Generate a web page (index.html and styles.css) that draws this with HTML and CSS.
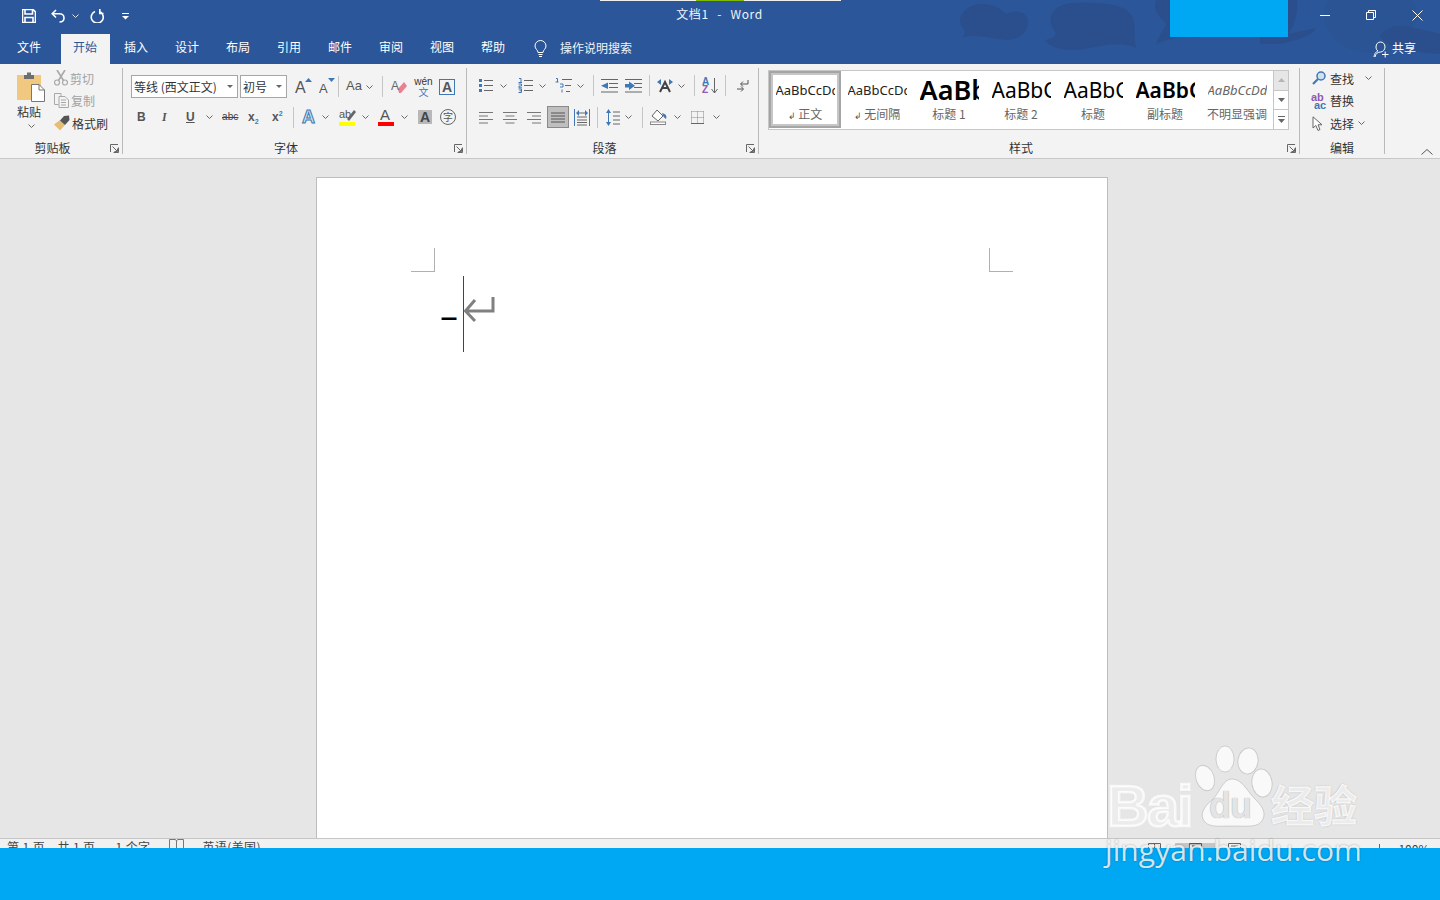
FILE: index.html
```html
<!DOCTYPE html>
<html lang="zh">
<head>
<meta charset="utf-8">
<title>文档1 - Word</title>
<link rel="stylesheet" href="styles.css">
</head>
<body>
<svg class="defs" width="0" height="0">
  <symbol id="chev" viewBox="0 0 7 4"><path d="M.5.5 3.5 3.5 6.5.5" fill="none" stroke="#666" stroke-width="1"/></symbol>
  <symbol id="launch" viewBox="0 0 9 9"><path d="M.5 8V.5H8M8.5 3.5V8.5H3.5M2.5 2.5 7 7M7.5 4.5V7.5H4.5" fill="none" stroke="#666" stroke-width="1"/></symbol>
</svg>
<div class="app">
  <header class="titlebar">
    <svg class="art" width="500" height="64" viewBox="0 0 500 64">
      <ellipse cx="430" cy="15" rx="46" ry="38" fill="#2a5494"/>
      <g fill="#2a4f8c">
        <path d="M22 38C24 34 26 32 24 30 14 20 24 4 42 4 54 4 62 10 66 14 72 10 88 10 88 22 88 34 78 39 66 40 52 39 36 33 22 38Z"/>
        <path d="M105 40C114 38 118 36 114 30 106 18 112 6 130 3 160 1 186 4 192 16 196 24 194 36 196 48 186 42 168 44 150 48 130 52 112 50 105 40Z"/>
        <path d="M216 0C212 8 218 16 226 24 222 32 218 38 216 44 230 38 240 36 260 38V0Z"/>
        <path d="M340 44C350 42 374 36 376 28L348 34C354 28 358 14 357 0H320V44Z"/>
        <path d="M440 36C446 26 462 24 474 28 486 30 500 34 500 34V54C480 52 450 52 440 36Z"/>
      </g>
    </svg>
    <div class="bluebox"></div>
    <div class="loadbar"><span></span></div>
    <div class="qat">
      <svg class="ic-save" width="14" height="14" viewBox="0 0 14 14"><path d="M.5.500H11L13.500 3V13.500H.5Z M3 .5V5H10.500V.5 M3 13.500V8.500H11V13.500" fill="none" stroke="#fff" stroke-width="1.600"/></svg>
      <svg class="ic-undo" width="14" height="14" viewBox="0 0 14 14"><path d="M5 1 1.200 4.800 5 8.500M1.500 4.800H8.500C11 4.800 13 6.500 13 9 13 11.500 11 13 8.500 13" fill="none" stroke="#fff" stroke-width="1.600"/></svg>
      <svg class="ic-chev-w" width="7" height="4" viewBox="0 0 7 4"><path d="M.5.500 3.500 3.500 6.500.500" fill="none" stroke="#dfe6f1"/></svg>
      <svg class="ic-redo" width="14" height="14" viewBox="0 0 14 14"><path d="M5 2.500A6 6 0 1 0 10.500 3M9.800 0V4.500H13.500" fill="none" stroke="#fff" stroke-width="1.600"/></svg>
      <svg class="ic-cust" width="7" height="7" viewBox="0 0 7 7"><path d="M0 .5H7" stroke="#fff"/><path d="M0 3H7L3.500 6.500Z" fill="#fff"/></svg>
    </div>
    <div class="doc-title">文档1&nbsp; -&nbsp; Word</div>
    <div class="winbtns">
      <svg width="10" height="10" viewBox="0 0 10 10"><path d="M0 5.500H10" stroke="#fff"/></svg>
      <svg width="10" height="10" viewBox="0 0 10 10"><path d="M.5 2.500H7.500V9.500H.5ZM2.500 2.500V.5H9.500V7.500H7.500" fill="none" stroke="#fff"/></svg>
      <svg width="11" height="11" viewBox="0 0 11 11"><path d="M.5.500 10.500 10.500M10.500.500.5 10.500" stroke="#fff"/></svg>
    </div>
  </header>

  <nav class="tabs">
    <span class="tab tab-file">文件</span>
    <span class="tab active">开始</span>
    <span class="tab">插入</span>
    <span class="tab">设计</span>
    <span class="tab">布局</span>
    <span class="tab">引用</span>
    <span class="tab">邮件</span>
    <span class="tab">审阅</span>
    <span class="tab">视图</span>
    <span class="tab">帮助</span>
    <span class="tell">
      <svg width="15" height="18" viewBox="0 0 15 18"><path d="M5 12.500C5 10 2 9 2 6A5.500 5.500 0 0 1 13 6C13 9 10 10 10 12.500ZM5.500 14.500H9.500M6 16.500H9" fill="none" stroke="#fff"/></svg>
      操作说明搜索
    </span>
    <span class="share">
      <svg width="16" height="17" viewBox="0 0 16 17"><path d="M1 16C1.500 12 3.500 10.500 5 10 3.500 9 3 7.500 3 6 3 3 5 1 7.500 1S12 3 12 6C12 8.500 10 11 7.500 11 5 11 2.500 12.500 2 16M9 13.500H15.500M12.200 10.500V16.500" fill="none" stroke="#fff"/></svg>
      共享
    </span>
  </nav>

  <section class="ribbon">
    <div class="group g-clip">
      <div class="clip-body">
        <div class="paste">
          <svg width="28" height="31" viewBox="0 0 28 31">
            <path d="M0 4H24V29H0Z" fill="#f0c87f"/>
            <path d="M7 4H10V1.500H14V4H17V8H7Z" fill="#6e6e6e"/>
            <path d="M14.500 13.500H22L27.500 19V30.500H14.500Z" fill="#fff" stroke="#777"/>
            <path d="M22 13.500V19H27.500" fill="none" stroke="#777"/>
          </svg>
          <span class="paste-label">粘贴</span>
          <svg class="paste-chev" width="7" height="4"><use href="#chev"/></svg>
        </div>
        <div class="clip-list">
          <div class="clip-row dim">
            <svg width="14" height="16" viewBox="0 0 14 16"><circle cx="3" cy="12.500" r="2.500" fill="none" stroke="#a8a8a8" stroke-width="1.200"/><circle cx="11" cy="12.500" r="2.500" fill="none" stroke="#a8a8a8" stroke-width="1.200"/><path d="M3 0 9.500 10.500M11 0 4.500 10.500" stroke="#a8a8a8" stroke-width="1.600"/></svg>
            <span>剪切</span>
          </div>
          <div class="clip-row dim">
            <svg width="15" height="15" viewBox="0 0 15 15"><path d="M.5.500H7V3M.5.500V11.500H4.500M5 3.500H11L14.500 7V14.500H5Z M7 7H12M7 9.500H12M7 12H12" fill="none" stroke="#a8a8a8"/></svg>
            <span>复制</span>
          </div>
          <div class="clip-row">
            <svg width="16" height="16" viewBox="0 0 16 16"><path d="M6 5 11 10 6 15.500 0 9.500Z" fill="#e6bd75"/><path d="M6 5.500 10 1 15 .5 15.500 5 11 10Z" fill="#555"/></svg>
            <span>格式刷</span>
          </div>
        </div>
      </div>
      <div class="glabel">剪贴板</div>
      <svg class="launch" width="9" height="9"><use href="#launch"/></svg>
    </div>

    <div class="group g-font">
      <div class="row">
        <div class="select sel-font"><span>等线 (西文正文)</span><i class="caret"></i></div>
        <div class="select sel-size ml-2"><span>初号</span><i class="caret"></i></div>
        <span class="gl gl-a ml-8">A<svg class="up" width="7" height="4" viewBox="0 0 7 4"><path d="M0 4 3.500 0 7 4Z" fill="#3f78b4"/></svg></span>
        <span class="gl gl-as ml-10">A<svg class="up" width="7" height="4" viewBox="0 0 7 4"><path d="M0 0H7L3.500 4Z" fill="#3f78b4"/></svg></span>
        <i class="sep ml-6"></i>
        <span class="gl gl-aa ml-7">Aa</span>
        <svg class="ml-4" width="7" height="4"><use href="#chev"/></svg>
        <i class="sep ml-9"></i>
        <svg class="ml-8" width="16" height="16" viewBox="0 0 16 16"><path d="M7 10 13 3 16 7 10 14H8Z" fill="#e8808f"/><text x="0" y="11" class="svgtxt">A</text></svg>
        <span class="wen ml-8"><b>wén</b><em>文</em></span>
        <span class="boxa ml-7">A</span>
      </div>
      <div class="row row2">
        <span class="fmt f-b ml-6">B</span>
        <span class="fmt f-i ml-15">I</span>
        <span class="fmt f-u ml-15">U</span>
        <svg class="ml-11" width="7" height="4"><use href="#chev"/></svg>
        <span class="fmt f-abc ml-9">abc</span>
        <span class="fmt f-x ml-10">x<sub>2</sub></span>
        <span class="fmt f-x ml-11">x<sup>2</sup></span>
        <i class="sep sep-s ml-8"></i>
        <span class="gl gl-fx ml-8">A</span>
        <svg class="ml-6" width="7" height="4"><use href="#chev"/></svg>
        <span class="hl ml-10"><span class="hl-t">ab</span><svg class="hl-p" width="10" height="12" viewBox="0 0 10 12"><path d="M1 10 8 1 10 3 3 12Z" fill="#666"/></svg><i class="bar bar-y"></i></span>
        <svg class="ml-7" width="7" height="4"><use href="#chev"/></svg>
        <span class="hl ml-9"><span class="fc">A</span><i class="bar bar-r"></i></span>
        <svg class="ml-7" width="7" height="4"><use href="#chev"/></svg>
        <span class="shade ml-10">A</span>
        <span class="circ ml-8">字</span>
      </div>
      <div class="glabel">字体</div>
      <svg class="launch" width="9" height="9"><use href="#launch"/></svg>
    </div>

    <div class="group g-para">
      <div class="row">
        <svg width="14" height="15" viewBox="0 0 14 15"><path d="M5 2.500H14M5 7.500H14M5 12.500H14" stroke="#666"/><path d="M0 1H3V4H0ZM0 6H3V9H0ZM0 11H3V14H0Z" fill="#3f78b4"/></svg>
        <svg class="ml-7" width="7" height="4"><use href="#chev"/></svg>
        <svg class="ml-11" width="15" height="15" viewBox="0 0 15 15"><path d="M6 2.500H15M6 7.500H15M6 12.500H15" stroke="#666"/><path d="M1 .5H3V4.500M.5 4.500H4M.5 6H3.500V8H1V9.800H4M.5 11H3.500V14.500H.5M1.500 12.800H3.500" fill="none" stroke="#3f78b4"/></svg>
        <svg class="ml-6" width="7" height="4"><use href="#chev"/></svg>
        <svg class="ml-9" width="17" height="15" viewBox="0 0 17 15"><path d="M7 1.500H17M10 7.500H16M11 13.500H15" stroke="#666"/><path d="M1 .5H2.500V4M.5 4H3.500M5 6H8V9H5M7 11.500V14.500" fill="none" stroke="#3f78b4"/></svg>
        <svg class="ml-5" width="7" height="4"><use href="#chev"/></svg>
        <i class="sep ml-9"></i>
        <svg class="ml-7" width="17" height="14" viewBox="0 0 17 14"><path d="M0 .5H17M8 4.500H17M8 8.500H17M0 13H17" stroke="#666"/><path d="M7 3.500V10L0 6.800Z" fill="#3f78b4"/></svg>
        <svg class="ml-7" width="17" height="14" viewBox="0 0 17 14"><path d="M0 .5H17M0 13H17M9 4.500H17M9 8.500H17" stroke="#666"/><path d="M0 5H4V2.500L10 6.800 4 11V8.500H0Z" fill="#3f78b4"/></svg>
        <i class="sep ml-7"></i>
        <svg class="ml-7" width="16" height="14" viewBox="0 0 16 14"><path d="M3 13 8 3 13 13M5 9H11" fill="none" stroke="#444" stroke-width="2"/><path d="M0 3 4 0V6ZM16 3 12 0V6Z" fill="#3f78b4"/></svg>
        <svg class="ml-5" width="7" height="4"><use href="#chev"/></svg>
        <i class="sep ml-9"></i>
        <span class="sort ml-7"><span class="sort-az"><b>A</b><em>Z</em></span><svg width="7" height="16" viewBox="0 0 7 16"><path d="M3.500 0V15M.5 11 3.500 15 6.500 11" fill="none" stroke="#666"/></svg></span>
        <i class="sep ml-8"></i>
        <svg class="ml-10" width="13" height="14" viewBox="0 0 13 14"><path d="M12 1V5H5M7 2.500 4.500 5 7 7.500" fill="none" stroke="#555"/><path d="M1 10H7M5 7.500 7.500 10 5 12.500" fill="none" stroke="#555"/></svg>
      </div>
      <div class="row row2">
        <svg width="14" height="13" viewBox="0 0 14 13"><path d="M0 1.500H14M0 5H9M0 8.500H14M0 12H9" stroke="#777"/></svg>
        <svg class="ml-10" width="14" height="13" viewBox="0 0 14 13"><path d="M0 1.500H14M2.500 5H11.500M0 8.500H14M2.500 12H11.500" stroke="#777"/></svg>
        <svg class="ml-10" width="14" height="13" viewBox="0 0 14 13"><path d="M0 1.500H14M5 5H14M0 8.500H14M5 12H14" stroke="#777"/></svg>
        <span class="just ml-6"><svg width="14" height="11" viewBox="0 0 14 11"><path d="M0 1H14M0 4H14M0 7H14M0 10H14" stroke="#555"/></svg></span>
        <svg class="ml-5" width="16" height="17" viewBox="0 0 16 17"><path d="M.5 0V17M15.500 0V17" stroke="#3f78b4"/><path d="M3 8H13M3 4H13M3 11H13M3 13.500H13M3 16H13" stroke="#666"/><path d="M2 4 5 1V7ZM14 4 11 1V7Z" fill="#3f78b4"/></svg>
        <i class="sep sep-s ml-7"></i>
        <svg class="ml-8" width="14" height="17" viewBox="0 0 14 17"><path d="M2.500 2V15" stroke="#3f78b4"/><path d="M0 4 2.500 0 5 4ZM0 13 2.500 17 5 13Z" fill="#3f78b4"/><path d="M7 3H14M7 7H14M7 11H14M7 15H14" stroke="#666"/></svg>
        <svg class="ml-5" width="7" height="4"><use href="#chev"/></svg>
        <i class="sep sep-s ml-10"></i>
        <svg class="ml-7" width="17" height="16" viewBox="0 0 17 16"><path d="M7 1 13 7 8 12 2 7Z" fill="#fff" stroke="#666"/><path d="M12 4C16 5 17 7 16 10 14 9 13 7 12 4Z" fill="#3f78b4"/><rect x=".5" y="13" width="15" height="2.500" fill="#fff" stroke="#888"/></svg>
        <svg class="ml-7" width="7" height="4"><use href="#chev"/></svg>
        <svg class="ml-10" width="13" height="13" viewBox="0 0 13 13"><path d="M.5.500H13M.5 6.500H13M.5 12.500H13M.5.500V13M6.500.500V13M12.500.500V13" fill="none" stroke="#888" stroke-dasharray="1 1"/><path d="M0 12.500H13" stroke="#666"/></svg>
        <svg class="ml-9" width="7" height="4"><use href="#chev"/></svg>
      </div>
      <div class="glabel">段落</div>
      <svg class="launch" width="9" height="9"><use href="#launch"/></svg>
    </div>

    <div class="group g-styles">
      <div class="gallery">
        <div class="style selected"><span class="pv pv-n">AaBbCcDdEe</span><span class="st"><i class="ret">↲</i> 正文</span></div>
        <div class="style"><span class="pv pv-n">AaBbCcDdEe</span><span class="st"><i class="ret">↲</i> 无间隔</span></div>
        <div class="style"><span class="pv pv-h1">AaBbC</span><span class="st">标题 1</span></div>
        <div class="style"><span class="pv pv-h2">AaBbCc</span><span class="st">标题 2</span></div>
        <div class="style"><span class="pv pv-h2">AaBbCc</span><span class="st">标题</span></div>
        <div class="style"><span class="pv pv-sub">AaBbCc</span><span class="st">副标题</span></div>
        <div class="style"><span class="pv pv-em">AaBbCcDdEe</span><span class="st">不明显强调</span></div>
        <div class="scroll">
          <span class="sb sb-off"><svg width="7" height="4" viewBox="0 0 7 4"><path d="M0 4 3.500 0 7 4Z" fill="#b5b5b5"/></svg></span>
          <span class="sb"><svg width="7" height="4" viewBox="0 0 7 4"><path d="M0 0H7L3.500 4Z" fill="#666"/></svg></span>
          <span class="sb"><svg width="7" height="7" viewBox="0 0 7 7"><path d="M0 .5H7" stroke="#666"/><path d="M0 3H7L3.500 7Z" fill="#666"/></svg></span>
        </div>
      </div>
      <div class="glabel">样式</div>
      <svg class="launch" width="9" height="9"><use href="#launch"/></svg>
    </div>

    <div class="group g-edit">
      <div class="edit-list">
        <div class="edit-row"><span class="edit-ic"><svg width="14" height="14" viewBox="0 0 14 14"><circle cx="9" cy="5" r="4" fill="#cfe0f0" stroke="#3f78b4" stroke-width="1.500"/><path d="M6 8 1 13" stroke="#3f78b4" stroke-width="2.200"/></svg></span><span>查找</span><svg class="ml-11" width="7" height="4"><use href="#chev"/></svg></div>
        <div class="edit-row"><span class="edit-ic"><span class="abac"><b>ab</b><em>ac</em></span></span><span>替换</span></div>
        <div class="edit-row"><span class="edit-ic"><svg width="11" height="15" viewBox="0 0 11 15"><path d="M1 .8V12L3.800 9.500 6 14.500 8 13.500 6 8.800H10Z" fill="#fff" stroke="#666"/></svg></span><span>选择</span><svg class="ml-4" width="7" height="4"><use href="#chev"/></svg></div>
      </div>
      <div class="glabel">编辑</div>
    </div>
    <svg class="collapse" width="12" height="6" viewBox="0 0 12 6"><path d="M.5 5.500 6 .5 11.500 5.500" fill="none" stroke="#555"/></svg>
  </section>

  <main class="workspace">
    <article class="page">
      <i class="crop crop-l"></i>
      <i class="crop crop-r"></i>
      <div class="line">
        <span class="typed">一</span>
        <i class="cursor"></i>
        <svg class="pilcrow" width="32" height="27" viewBox="0 0 32 27"><path d="M30 1V15H3M12 4 2.500 15 12 25" fill="none" stroke="#808080" stroke-width="3"/></svg>
      </div>
    </article>
  </main>

  <footer class="status">
    <div class="status-in">
      <span class="s-pg">第 1 页，共 1 页</span>
      <span class="s-wc">1 个字</span>
      <svg class="s-pf" width="15" height="14" viewBox="0 0 15 14"><path d="M.5.500H6.500L7.500 2 8.500.5H14.500V12H.5Z M7.500 2V12" fill="none" stroke="#777"/></svg>
      <span class="s-la">英语(美国)</span>
      <span class="s-right">
        <svg width="13" height="12" viewBox="0 0 13 12"><path d="M.5.500H12.500V11.500H.5ZM6.500.500V11.500" fill="none" stroke="#666"/></svg>
        <span class="s-act"><svg width="13" height="12" viewBox="0 0 13 12"><path d="M.5.500H12.500V11.500H.5ZM3 3H10" fill="none" stroke="#555"/></svg></span>
        <svg width="13" height="12" viewBox="0 0 13 12"><path d="M.5.500H12.500V11.500H.5ZM3 3H10" fill="none" stroke="#666"/></svg>
        <span class="s-minus">–</span>
        <i class="s-tick"></i>
        <span class="s-zoom">100%</span>
      </span>
    </div>
  </footer>
  <div class="coverbar"></div>

  <div class="watermark">
    <svg class="paw" width="80" height="90" viewBox="0 0 80 90">
      <g fill="#fff" fill-opacity=".75" stroke="#000" stroke-opacity=".14">
        <ellipse cx="12" cy="33" rx="9" ry="13" transform="rotate(-20 12 33)"/>
        <ellipse cx="32" cy="14" rx="9" ry="13"/>
        <ellipse cx="55" cy="16" rx="10" ry="13" transform="rotate(8 55 16)"/>
        <ellipse cx="69" cy="38" rx="10" ry="14" transform="rotate(-8 69 38)"/>
        <path d="M39 34C49 34 54 46 62 54 69 61 73 67 70 74 66 83 55 81 40 81 25 81 14 83 10 74 7 67 13 60 20 54 27 47 30 34 39 34Z"/>
      </g>
    </svg>
    <span class="wm-bai">Bai</span>
    <span class="wm-du">du</span>
    <span class="wm-cn">经验</span>
    <span class="wm-url">jingyan.baidu.com</span>
  </div>
</div>
</body>
</html>
```

FILE: styles.css
```css
* { box-sizing: border-box; }
html, body { margin: 0; height: 100%; overflow: hidden; }
body { font-family: "Noto Sans CJK SC", "Noto Sans", sans-serif; font-size: 12px; color: #444; }
i, em { font-style: normal; }
svg { flex: none; display: block; }
.defs { position: absolute; }
.app { position: relative; width: 1440px; height: 900px; display: flex; flex-direction: column; overflow: hidden; }

.titlebar { position: relative; height: 36px; background: #2b579a; color: #fff; display: flex; align-items: center; flex: none; }
.art { position: absolute; left: 940px; top: 0; z-index: 1; }
.bluebox { position: absolute; left: 1170px; top: 0; width: 118px; height: 37px; background: #00a8f3; z-index: 2; }
.loadbar { position: absolute; left: 600px; top: 0; width: 241px; height: 1px; background: #eee; }
.loadbar span { display: block; margin-left: 96px; width: 48px; height: 1px; background: #7fba00; }
.qat { position: relative; display: flex; align-items: center; padding-left: 22px; width: 300px; margin-top: -4px; }
.ic-undo { margin-left: 15px; }
.ic-chev-w { margin-left: 7px; }
.ic-redo { margin-left: 11px; }
.ic-cust { margin-left: 18px; }
.doc-title { position: absolute; left: 600px; width: 239px; top: 5px; text-align: center; line-height: 17px; font-size: 12px; color: #f0f3f8; letter-spacing: .6px; word-spacing: 1px; white-space: nowrap; }
.winbtns { position: absolute; left: 1320px; top: 10px; display: flex; gap: 36px; z-index: 3; }

.tabs { position: relative; height: 28px; background: #2b579a; display: flex; align-items: stretch; color: #fff; flex: none; }
.tab { width: 49px; margin-right: 2px; padding-left: 12px; line-height: 22px; height: 28px; position: relative; z-index: 2; }
.tab-file { margin-left: 5px; margin-right: 7px; }
.tab.active { background: #f3f3f3; color: #2b579a; margin-top: -2px; height: 30px; line-height: 26px; }
.tell { display: flex; align-items: center; gap: 12px; margin-left: 13px; height: 22px; white-space: nowrap; color: #f0f3f8; }
.tell svg { margin-top: 3px; }
.share { position: absolute; left: 1373px; top: 3px; display: flex; align-items: center; gap: 3px; height: 16px; z-index: 3; }
.share svg { margin-top: 4px; }

.ribbon { position: relative; height: 95px; background: #f3f3f3; border-bottom: 1px solid #c8c8c8; display: flex; align-items: flex-start; padding-top: 4px; flex: none; }
.group { position: relative; height: 86px; border-right: 1px solid #b9b9b9; flex: none; display: flex; flex-direction: column; }
.glabel { position: absolute; left: 0; right: 0; bottom: -1px; text-align: center; line-height: 14px; color: #333; }
.launch { position: absolute; right: 3px; bottom: 1px; }
.g-clip { width: 123px; }
.g-clip .glabel { right: 17px; }
.g-font { width: 344px; padding: 7px 0 0 8px; }
.g-para { width: 292px; padding: 6px 0 0 12px; }
.g-para .row2 { margin-top: 9px; }
.g-styles { width: 541px; }
.g-edit { width: 85px; }
.g-font .glabel { right: 17px; }
.g-para .glabel { right: 16px; }
.g-styles .glabel { right: 16px; }

.clip-body { display: flex; }
.paste { width: 53px; padding: 3px 0 0 17px; display: flex; flex-direction: column; align-items: flex-start; }
.paste-label { margin-top: 2px; line-height: 16px; color: #333; }
.paste-chev { margin: 4px 0 0 11px; }
.clip-list { display: flex; flex-direction: column; margin-top: -1px; }
.clip-row { display: flex; align-items: center; height: 22.5px; width: 60px; white-space: nowrap; color: #333; }
.clip-row svg { margin-left: 1px; }
.clip-row span { position: relative; margin-left: 2px; }
.clip-row.dim { color: #a2a2a2; }

.row { display: flex; align-items: center; height: 23px; white-space: nowrap; }
.row2 { margin-top: 8px; height: 22px; }
.select { display: flex; align-items: center; justify-content: space-between; height: 23px; background: #fff; border: 1px solid #a6a6a6; padding: 0 4px 0 2px; color: #333; }
.sel-font { width: 107px; }
.sel-size { width: 47px; }
.caret { width: 0; height: 0; border: 3px solid transparent; border-top: 3px solid #666; border-bottom: 0; }
.sep { width: 1px; height: 21px; background: #c6c6c6; flex: none; }
.sep-s { height: 21px; }

.ml-2 { margin-left: 2px; } .ml-4 { margin-left: 4px; } .ml-5 { margin-left: 5px; } .ml-6 { margin-left: 6px; }
.ml-7 { margin-left: 7px; } .ml-8 { margin-left: 8px; } .ml-9 { margin-left: 9px; } .ml-10 { margin-left: 10px; }
.ml-11 { margin-left: 11px; } .ml-15 { margin-left: 15px; }

.gl { position: relative; font-family: "Liberation Sans", sans-serif; color: #555; line-height: 1; }
.gl-a { font-size: 16px; width: 14px; padding-top: 2px; }
.gl-as { font-size: 13px; width: 13px; padding-top: 4px; }
.up { position: absolute; right: -3px; top: 0; }
.gl-aa { font-size: 13px; width: 16px; margin-top: -2px; }
.svgtxt { font: 12px "Liberation Sans", sans-serif; fill: #666; }
.wen { width: 17px; display: flex; flex-direction: column; align-items: center; line-height: 10px; }
.wen b { font: 10px/10px "Liberation Sans", sans-serif; color: #333; }
.wen em { font-size: 10px; line-height: 9px; color: #3f78b4; }
.boxa { width: 16px; height: 16px; border: 1px solid #3f78b4; font: bold 14px/14px "Liberation Sans", sans-serif; text-align: center; color: #555; }

.fmt { font-family: "Liberation Sans", sans-serif; color: #555; line-height: 1; font-weight: 700; }
.f-b { width: 10px; font-size: 12px; }
.f-i { width: 9px; font-size: 12px; font-style: italic; font-family: "Liberation Serif", serif; }
.f-u { width: 9px; font-size: 12px; text-decoration: underline; }
.f-abc { width: 16px; font-size: 10px; text-decoration: line-through; font-weight: 400; letter-spacing: .1px; color: #444; }
.f-x { width: 13px; font-size: 12px; }
.f-x sub, .f-x sup { font-size: 7px; line-height: 0; color: #3f78b4; }
.gl-fx { width: 14px; font-size: 18px; font-weight: 700; color: #cfe0f0; -webkit-text-stroke: 1px #3f78b4; }
.hl { position: relative; width: 16px; height: 16px; display: block; }
.hl-t { position: absolute; left: 0; top: 0; font: 11px/10px "Liberation Sans", sans-serif; color: #555; }
.hl-p { position: absolute; right: -1px; top: 0; }
.bar { position: absolute; left: 0; bottom: -1px; width: 16px; height: 4px; }
.bar-y { background: #ffff00; }
.bar-r { background: #ff0000; }
.fc { position: absolute; left: 2px; top: -2px; font: 15px/15px "Liberation Sans", sans-serif; color: #555; }
.shade { width: 14px; height: 14px; background: #b8b8b8; color: #444; text-align: center; font: bold 14px/14px "Liberation Sans", sans-serif; }
.circ { width: 16px; height: 16px; border: 1px solid #666; border-radius: 50%; font-size: 10px; line-height: 13px; text-align: center; color: #555; }
.sort { display: flex; align-items: center; gap: 2px; width: 15px; }
.sort-az { display: flex; flex-direction: column; font: bold 10px/8px "Liberation Sans", sans-serif; }
.sort-az b { color: #3f78b4; }
.sort-az em { color: #8f5ab0; }
.just { width: 22px; height: 22px; background: #bfbfbf; border: 1px solid #8a8a8a; display: flex; align-items: center; justify-content: center; flex: none; }

.gallery { margin: 2px 0 0 9px; position: relative; width: 521px; height: 60px; background: #fff; border: 1px solid #c6c6c6; display: flex; }
.style { width: 72px; height: 58px; display: flex; flex-direction: column; align-items: center; color: #666; }
.style.selected { height: 57px; border: 2px solid #a5a5a5; outline: 2px solid #c6c6c6; outline-offset: -4px; }
.pv { display: block; width: 59px; overflow: hidden; white-space: nowrap; height: 35px; line-height: 38px; color: #000; font-family: "Noto Sans", sans-serif; flex: none; }
.selected .pv { margin-top: -2px; }
.pv-n { font-size: 13px; color: #222; }
.pv-h1 { font-size: 27px; font-weight: 600; line-height: 37px; }
.pv-h2 { font-size: 21px; }
.pv-sub { font-size: 21px; font-weight: 600; }
.pv-em { font-size: 13px; font-style: italic; color: #666; }
.st { line-height: 16px; white-space: nowrap; color: #666; }
.ret { font-size: 9px; color: #555; }
.scroll { position: absolute; right: 0; top: 0; width: 15px; height: 58px; border-left: 1px solid #c6c6c6; display: flex; flex-direction: column; }
.sb { flex: 1; display: flex; align-items: center; justify-content: center; border-bottom: 1px solid #c6c6c6; background: #fff; }
.sb:last-child { border-bottom: 0; }
.sb-off { background: #e6e6e6; }

.edit-list { display: flex; flex-direction: column; margin-top: -1px; }
.edit-row { display: flex; align-items: center; height: 22.5px; color: #333; white-space: nowrap; }
.edit-ic { width: 30px; padding-left: 12px; display: flex; justify-content: flex-start; }
.abac { display: flex; flex-direction: column; font: bold 11px/8px "Liberation Sans", sans-serif; margin-left: -1px; }
.abac b { color: #8f5ab0; }
.abac em { color: #3f78b4; margin-left: 3px; }
.collapse { position: absolute; left: 1421px; top: 85px; }

.workspace { flex: 1; min-height: 0; background: #e6e6e6; padding: 18px 0 0 316px; overflow: hidden; }
.page { position: relative; width: 792px; height: 900px; background: #fff; border: 1px solid #bdbdbd; }
.crop { position: absolute; top: 70px; width: 24px; height: 24px; border-bottom: 1px solid #b0b0b0; }
.crop-l { left: 94px; border-right: 1px solid #b0b0b0; }
.crop-r { left: 672px; border-left: 1px solid #b0b0b0; }
.line { position: absolute; left: 124px; top: 98px; display: flex; align-items: flex-start; }
.typed { width: 22px; height: 76px; font-size: 16px; font-weight: 900; line-height: 84px; color: #000; }
.cursor { width: 1px; height: 76px; background: #444; }
.pilcrow { margin-top: 20px; margin-left: -1px; }

.status { height: 10px; background: #f1f1f1; border-top: 1px solid #c6c6c6; overflow: hidden; flex: none; }
.status-in { position: relative; height: 22px; display: flex; align-items: center; padding: 0 0 8px 7px; color: #444; white-space: nowrap; font-size: 12px; }
.s-pg, .s-wc, .s-la { letter-spacing: .4px; }
.s-wc { margin-left: 20px; }
.s-pf { margin-left: 19px; }
.s-la { margin-left: 18px; }
.s-right { position: absolute; left: 1148px; top: 1px; display: flex; align-items: center; }
.s-act { width: 40px; height: 12px; margin-left: 14px; background: #c6c6c6; display: flex; justify-content: center; }
.s-act + svg { margin-left: 13px; }
.s-minus { margin-left: 80px; }
.s-tick { width: 1px; height: 10px; background: #666; margin-left: 52px; }
.s-zoom { margin-left: 18px; }
.coverbar { height: 52px; background: #00a8f3; flex: none; }

.watermark { position: absolute; left: 1100px; top: 745px; width: 280px; height: 130px; color: rgba(255, 255, 255, .82); text-shadow: 0 0 2px rgba(0, 0, 0, .35); z-index: 5; }
.paw { position: absolute; left: 93px; top: 0; }
.watermark span { position: absolute; white-space: nowrap; line-height: 1; }
.wm-bai { left: 7px; top: 32px; font: 700 58px/1 "Liberation Sans", sans-serif; letter-spacing: -2px; -webkit-text-stroke: 2.5px rgba(255, 255, 255, .82); }
.wm-du { left: 109px; top: 43px; font: 700 36px/1 "Liberation Sans", sans-serif; color: #e4e4e4; text-shadow: 0 0 1px #999; letter-spacing: -1px; }
.wm-cn { left: 171px; top: 37px; font: 700 43px/1 "Noto Sans CJK SC", sans-serif; -webkit-text-stroke: 1px rgba(255, 255, 255, .82); }
.wm-url { left: 5px; top: 90px; font: 400 30px/1 "Open Sans", sans-serif; letter-spacing: .1px; }
```
